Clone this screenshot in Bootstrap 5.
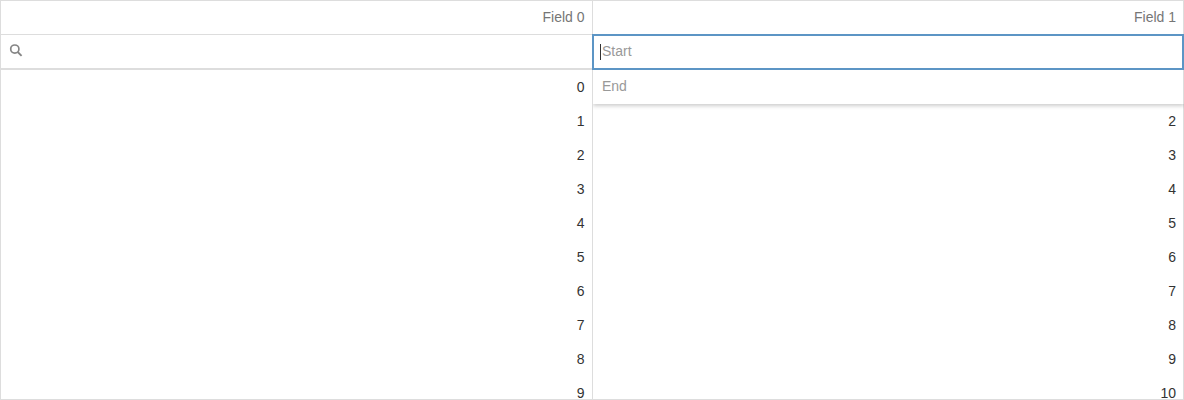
<!DOCTYPE html>
<html lang="en">
<head>
<meta charset="utf-8">
<title>Data grid</title>
<link href="https://cdn.jsdelivr.net/npm/bootstrap@5.3.0/dist/css/bootstrap.min.css" rel="stylesheet">
<style>
body { font: 14px/20px "Liberation Sans", Arial, sans-serif; color: #333; background: #fff; }
.grid { height: 400px; border: 1px solid #ddd; }
.grid-clip { height: 400px; clip-path: inset(0); }
.grid-col { height: 398px; overflow: hidden; }
.grid-col + .grid-col { border-left: 1px solid #ddd; }
.grid-col:first-child { flex: 0 0 591px; }
.grid-col:first-child .head-cell, .grid-col:first-child .data-cell { padding-right: 7.5px; }
.grid-col:last-child { flex: 1 1 0; }
.head-cell { height: 34px; padding: 6px 7px; border-bottom: 1px solid #ddd; color: #767676; }
.filter-cell { height: 35px; border-bottom: 2px solid #ddd; padding-left: 8px; }
.data-cell { height: 34px; padding: 7px 7px; }
.range-popup { top: 34px; left: 592px; right: 0; }
.range-start { height: 36px; border: 2px solid #5c95c5; background: #fff; padding: 0 6px 2px; color: #999; }
.caret { width: 1px; height: 16px; background: #333; margin: 2px 1px 0 0; }
.range-end { height: 34px; margin: 0 0 0 1px; padding: 6px 9px; background: #fff; color: #999; border-right: 1px solid #ddd; box-shadow: 0 2px 4px rgba(0,0,0,.2); clip-path: inset(0 0 -8px 0); }
</style>
</head>
<body class="overflow-hidden">
<div class="grid-clip position-relative">
  <div class="grid d-flex">
    <section class="grid-col text-end">
      <div class="head-cell">Field 0</div>
      <div class="filter-cell text-start">
        <svg class="d-block" width="16" height="32" viewBox="0 0 16 32" fill="none" stroke="#858585"><circle cx="5.8" cy="14.1" r="4.1" stroke-width="1.7"/><path d="M8.7 17 12.6 20.9" stroke-width="1.8"/></svg>
      </div>
      <div class="data-cell">0</div><div class="data-cell">1</div><div class="data-cell">2</div><div class="data-cell">3</div><div class="data-cell">4</div>
      <div class="data-cell">5</div><div class="data-cell">6</div><div class="data-cell">7</div><div class="data-cell">8</div><div class="data-cell">9</div>
    </section>
    <section class="grid-col text-end">
      <div class="head-cell">Field 1</div>
      <div class="filter-cell"></div>
      <div class="data-cell">1</div><div class="data-cell">2</div><div class="data-cell">3</div><div class="data-cell">4</div><div class="data-cell">5</div>
      <div class="data-cell">6</div><div class="data-cell">7</div><div class="data-cell">8</div><div class="data-cell">9</div><div class="data-cell">10</div>
    </section>
  </div>
  <div class="range-popup position-absolute">
    <div class="range-start position-relative d-flex align-items-center"><span class="caret"></span><span>Start</span></div>
    <div class="range-end">End</div>
  </div>
</div>
<script src="https://cdn.jsdelivr.net/npm/bootstrap@5.3.0/dist/js/bootstrap.bundle.min.js"></script>
</body>
</html>
